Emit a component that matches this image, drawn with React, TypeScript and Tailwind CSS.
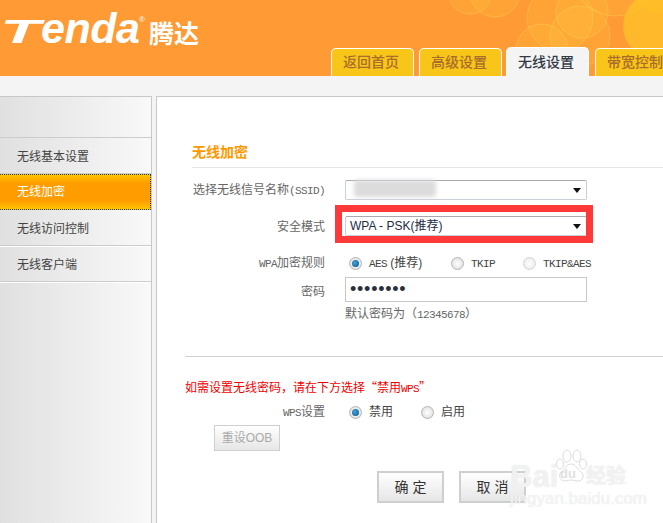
import React from "react";

const cjk = "font-['Liberation_Sans','Noto_Sans_CJK_SC',sans-serif]";

function Tab({ label, active, className = "" }: { label: string; active?: boolean; className?: string }) {
  return (
    <div
      className={`rounded-t-[5px] border border-b-0 border-white flex items-center justify-center shrink-0 text-[14px] font-medium pr-[3px] ${
        active ? "bg-[#f4f4f4] text-[#333b48] h-[29px]" : "bg-[#f8c619] text-[#a96c2c] h-[28px]"
      } ${className}`}
    >
      {label}
    </div>
  );
}

function MenuItem({ label, active }: { label: string; active?: boolean }) {
  if (active) {
    return (
      <div className="h-[36px] flex items-center pl-[17px] text-white text-[12px] border-y border-r border-dotted border-[#23408f] bg-[linear-gradient(to_bottom,#ffc400,#ff9c00_25%,#ff9c00_75%,#ffc400)]">
        {label}
      </div>
    );
  }
  return (
    <div className="h-[36px] flex items-center pl-[17px] pt-[2px] text-[#444] text-[12px] border-b border-[#cccccc] shadow-[0_1px_0_#ffffff]">
      {label}
    </div>
  );
}

function Radio({ checked }: { checked?: boolean }) {
  return (
    <span className="w-[13px] h-[13px] rounded-full border border-[#b4b4b4] bg-[radial-gradient(circle,#ffffff,#d9d9d9)] flex items-center justify-center shrink-0">
      {checked && (
        <span className="w-[7px] h-[7px] rounded-full bg-[radial-gradient(circle_at_40%_40%,#3fa5dd,#0b4f86)]" />
      )}
    </span>
  );
}

function Opt({ label, checked, w, dim, className = "" }: { label: React.ReactNode; checked?: boolean; w: string; dim?: boolean; className?: string }) {
  return (
    <div className={`flex items-center gap-[7px] ${w} ${className}`}>
      <span className={dim ? "opacity-60" : ""}><Radio checked={checked} /></span>
      <span className="text-[#444] text-[12px] whitespace-nowrap">{label}</span>
    </div>
  );
}

function Mono({ children }: { children: React.ReactNode }) {
  return <span className="font-['Liberation_Mono',monospace] text-[11px] tracking-[-0.6px]">{children}</span>;
}

function Row({ label, children, className = "", labelClass = "pt-[1px]" }: { label: React.ReactNode; children: React.ReactNode; className?: string; labelClass?: string }) {
  return (
    <div className={`flex items-center ${className}`}>
      <div className={`w-[133px] text-right text-[12px] text-[#666] whitespace-nowrap shrink-0 ${labelClass}`}>{label}</div>
      <div className="ml-[20px] flex items-center relative h-full">{children}</div>
    </div>
  );
}

function Select({ value }: { value?: string }) {
  return (
    <div className="w-[242px] h-[20px] bg-white border border-[#c9d0d8] border-t-[#a9a9b2] rounded-[2px] flex items-center justify-between pl-[4px] pr-[4px] relative">
      <span className="text-[12px] text-[#1d2b44]">{value}</span>
      <svg width="8" height="5" viewBox="0 0 8 5" className="mr-[1px]"><path d="M0 0h8L4 5z" fill="#111" /></svg>
    </div>
  );
}

function Button({ children, className = "" }: { children: React.ReactNode; className?: string }) {
  return (
    <div className={`border-[#cfcfcf] bg-[linear-gradient(to_bottom,#ffffff,#e6e6e6)] flex items-center justify-center ${className}`}>
      {children}
    </div>
  );
}

export default function App() {
  return (
    <div className={`w-[663px] h-[523px] overflow-hidden relative bg-[#f4f4f4] flex flex-col ${cjk}`}>
      {/* header */}
      <header className="h-[76px] shrink-0 bg-[#ff9a35] relative overflow-hidden">
        <svg width="343" height="76" viewBox="0 0 343 76" className="absolute right-0 top-0">
          <g fill="#ffd23c" fillOpacity="0.16" stroke="#ffd75a" strokeOpacity="0.4">
            <circle cx="150" cy="-8" r="22" />
            <circle cx="175" cy="-8" r="25" />
            <circle cx="240" cy="18" r="33" />
            <circle cx="262" cy="12" r="26" />
            <circle cx="222" cy="50" r="26" />
            <circle cx="260" cy="36" r="30" />
            <circle cx="295" cy="-28" r="44" />
          </g>
          <circle cx="336" cy="26" r="33" fill="#ffc327" fillOpacity="0.75" />
          <circle cx="340" cy="-14" r="28" fill="#ffc327" fillOpacity="0.55" />
        </svg>
        <div className="absolute left-0 top-[7px] flex items-baseline text-white font-['Liberation_Sans',sans-serif] font-bold italic">
          <span className="inline-block text-[33px] leading-[43px] w-[41px] scale-x-[2] origin-left">T</span>
          <span className="text-[43px] leading-[43px] tracking-[-0.5px]">enda</span>
        </div>
        <span className="absolute left-[139px] top-[16px] text-[8px] leading-none text-white">®</span>
        <span className="absolute left-[149px] top-[18px] font-['Noto_Sans_CJK_SC',sans-serif] font-bold text-[25px] leading-[28px] text-white whitespace-nowrap">腾达</span>
        <nav className="absolute left-[331px] bottom-0 flex items-end">
          <Tab label="返回首页" className="w-[83px]" />
          <Tab label="高级设置" className="w-[83px] ml-[5px]" />
          <Tab label="无线设置" active className="w-[83px] ml-[4px]" />
          <Tab label="带宽控制" className="w-[83px] ml-[6px]" />
        </nav>
      </header>

      <div className="h-[20px] shrink-0" />

      <div className="flex flex-1 min-h-0">
        {/* sidebar */}
        <aside className="w-[152px] shrink-0 border-t border-r border-[#c8c8c8] bg-[linear-gradient(to_right,#e0e0e0,#f9f9f9)] pt-[40px]">
          <div className="border-t border-[#cccccc]">
            <MenuItem label="无线基本设置" />
            <MenuItem label="无线加密" active />
            <MenuItem label="无线访问控制" />
            <MenuItem label="无线客户端" />
          </div>
        </aside>

        {/* content */}
        <main className="ml-[4px] flex-1 min-w-0 bg-white border-t border-l border-[#c8c8c8] pl-[35px]">
          <div className="mt-[45px] h-[26px] border-b border-[#e6e6e6] text-[#ff9900] text-[14px] font-bold leading-[20px]">
            无线加密
          </div>

          <Row className="mt-[12px] h-[20px]" label={<>选择无线信号名称<Mono>(SSID)</Mono></>}>
            <Select />
            <span className="absolute left-[9px] top-0 w-[82px] h-[17px] bg-[#dcdcdc] blur-[2px] rounded-[2px]" />
          </Row>

          <Row className="mt-[16px] h-[20px]" label="安全模式">
            <Select value="WPA - PSK(推荐)" />
            <span className="absolute -left-[10px] -top-[11px] w-[258px] h-[38px] border-[7px] border-[#ff3939]" />
          </Row>

          <Row className="mt-[16px] h-[22px]" label={<><Mono>WPA</Mono>加密规则</>}>
            <Opt label={<><Mono>AES</Mono> (推荐)</>} checked w="w-[102px]" className="ml-[4px]" />
            <Opt label={<Mono>TKIP</Mono>} w="w-[72px]" />
            <Opt label={<Mono>TKIP&amp;AES</Mono>} w="w-[80px]" dim />
          </Row>

          <Row className="mt-[3px] h-[25px]" label="密码" labelClass="pt-[5px]">
            <div className="w-[242px] h-[25px] border border-[#c8c8c8] flex items-center pl-[4px] text-[#2a2f3a] text-[18px] tracking-[0.75px]">
              ••••••••
            </div>
          </Row>

          <div className="mt-[2px] h-[18px] ml-[153px] text-[12px] text-[#666] leading-[20px]">
            默认密码为（<Mono>12345678</Mono>）
          </div>

          <div className="mt-[34px] -ml-[7px] h-px bg-[#cfcfcf]" />

          <div className="mt-[22px] -ml-[7px] h-[16px] text-[12px] text-[#f00000] leading-[16px] whitespace-nowrap">
            如需设置无线密码，请在下方选择<span className="font-['Noto_Sans_CJK_SC',sans-serif]">“</span>禁用<Mono>WPS</Mono><span className="font-['Noto_Sans_CJK_SC',sans-serif]">”</span>
          </div>

          <Row className="mt-[6px] h-[22px]" label={<><Mono>WPS</Mono>设置</>}>
            <Opt label="禁用" checked w="w-[72px]" className="ml-[4px]" />
            <Opt label="启用" w="w-[60px]" />
          </Row>

          <Button className="mt-[2px] ml-[22px] w-[66px] h-[26px] text-[12px] text-[#aaa] border">重设OOB</Button>

          <div className="mt-[20px] ml-[185px] flex gap-[15px]">
            <Button className="w-[67px] h-[32px] text-[14px] text-[#333] border-2">确&nbsp;定</Button>
            <Button className="w-[67px] h-[32px] text-[14px] text-[#333] border-2">取&nbsp;消</Button>
          </div>
        </main>
      </div>

      {/* watermark */}
      <div className="absolute left-[510px] top-[449px] w-[122px] h-[60px] pointer-events-none">
        <div className="absolute left-0 top-[15px] font-['Liberation_Sans',sans-serif] font-bold text-[31px] leading-[26px] text-white/70 [text-shadow:0_0_1px_#d4d4d4]">Bai</div>
        <svg width="34" height="34" viewBox="0 0 34 34" className="absolute left-[44px] top-0">
          <g fill="#fff" fillOpacity="0.6" stroke="#dcdcdc">
            <ellipse cx="6" cy="15" rx="3.5" ry="5" />
            <ellipse cx="13" cy="7" rx="4" ry="6" />
            <ellipse cx="23" cy="7" rx="4" ry="6" />
            <ellipse cx="29" cy="15" rx="3.5" ry="5" />
            <path d="M17 15c-5 0-6 5-10 8-3 3-1 9 4 9 3 0 4-1 6-1s4 1 7 1c5 0 7-6 3-9-4-3-5-8-10-8z" />
          </g>
        </svg>
        <div className="absolute left-[50px] top-[18px] font-['Liberation_Sans',sans-serif] font-bold text-[13px] leading-[14px] text-[#e0e0e0]">du</div>
        <div className="absolute left-[76px] top-[14px] font-['Noto_Sans_CJK_SC',sans-serif] font-bold text-[20px] leading-[24px] text-white/70 [text-shadow:0_0_1px_#d4d4d4] whitespace-nowrap">经验</div>
        <div className="absolute left-0 top-[42px] font-['Liberation_Sans',sans-serif] text-[17px] leading-[16px] text-white/70 [text-shadow:0_0_1px_#d8d8d8] whitespace-nowrap">jingyan.baidu.com</div>
      </div>
    </div>
  );
}
